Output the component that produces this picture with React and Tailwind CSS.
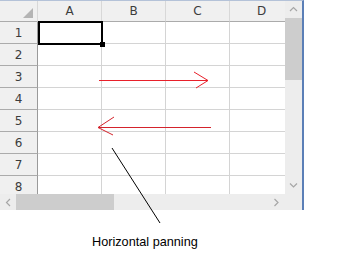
const cols = ['A', 'B', 'C', 'D']
const rows = [1, 2, 3, 4, 5, 6, 7, 8]

function Chevron({ dir }) {
    const paths = {
        up: 'M1 5 L4.5 1.5 L8 5',
        down: 'M1 1.5 L4.5 5 L8 1.5',
        left: 'M5 1 L1.5 4.5 L5 8',
        right: 'M1.5 1 L5 4.5 L1.5 8',
    }
    const size = dir === 'up' || dir === 'down' ? { w: 9, h: 7 } : { w: 7, h: 9 }
    return (
        <svg width={size.w} height={size.h} viewBox={`0 0 ${size.w} ${size.h}`}>
            <path d={paths[dir]} fill="none" stroke="#a6a6a6" strokeWidth="1.2" />
        </svg>
    )
}

export default function App() {
    return (
        <div className="relative h-[267px] w-[361px] bg-white font-['Liberation_Sans',sans-serif]">
            {/* Spreadsheet control */}
            <div className="flex h-[210px] w-[304px] flex-col border-r-2 border-t border-r-[#5b7fb7] border-t-[#b4c2d8] bg-white">
                <div className="flex min-h-0 flex-1">
                    <div className="relative flex-1 overflow-hidden">
                        {/* column headers */}
                        <div className="flex h-[21px] w-max">
                            <div className="relative h-[21px] w-[38px] shrink-0 border-b border-r border-b-[#ababab] border-r-[#d8d8d8] bg-[#f0f0f0]">
                                <div className="absolute bottom-[3px] right-[4px] h-0 w-0 border-b-[10px] border-l-[10px] border-b-[#b4b4b4] border-l-transparent" />
                            </div>
                            {cols.map((c) => (
                                <div
                                    key={c}
                                    className="flex h-[21px] w-[64px] shrink-0 items-center justify-center border-b border-r border-b-[#ababab] border-r-[#d8d8d8] bg-[#f0f0f0] font-['DejaVu_Sans',sans-serif] text-[12px] text-[#3c3c3c]"
                                >
                                    {c}
                                </div>
                            ))}
                        </div>
                        {/* rows */}
                        {rows.map((r) => (
                            <div key={r} className="flex h-[22px] w-max">
                                <div className="flex h-[22px] w-[38px] shrink-0 items-center justify-center border-b border-r border-b-[#ababab] border-r-[#9a9a9a] bg-[#f0f0f0] font-['DejaVu_Sans',sans-serif] text-[12px] text-[#3c3c3c]">
                                    {r}
                                </div>
                                {cols.map((c) => (
                                    <div key={c} className="h-[22px] w-[64px] shrink-0 border-b border-r border-[#d4d4d4] bg-white" />
                                ))}
                            </div>
                        ))}
                        {/* active cell A1 */}
                        <div className="absolute left-[38px] top-[20px] h-[24px] w-[65px] border-2 border-black">
                            <div className="absolute -bottom-[4px] -right-[4px] h-[5px] w-[5px] bg-black" />
                        </div>
                    </div>
                    {/* vertical scrollbar */}
                    <div className="flex w-[17px] shrink-0 flex-col bg-[#ededed]">
                        <div className="flex h-[17px] items-center justify-center">
                            <Chevron dir="up" />
                        </div>
                        <div className="h-[62px] bg-[#cdcdcd]" />
                        <div className="flex-1" />
                        <div className="flex h-[17px] items-center justify-center">
                            <Chevron dir="down" />
                        </div>
                    </div>
                </div>
                {/* horizontal scrollbar */}
                <div className="flex h-[16px] shrink-0">
                    <div className="flex flex-1 bg-[#ededed]">
                        <div className="flex w-[16px] items-center justify-center">
                            <Chevron dir="left" />
                        </div>
                        <div className="w-[98px] bg-[#cdcdcd]" />
                        <div className="flex-1" />
                        <div className="flex w-[17px] items-center justify-center">
                            <Chevron dir="right" />
                        </div>
                    </div>
                    <div className="w-[17px] bg-[#ededed]" />
                </div>
            </div>

            <div className="mt-[25px] pl-[92px] text-[12.7px] leading-[15px] text-black">Horizontal panning</div>

            {/* annotation drawing */}
            <svg className="pointer-events-none absolute inset-0" width="361" height="267">
                <g stroke="#e8202a" strokeWidth="1" fill="none">
                    <line x1="99" y1="80.5" x2="208" y2="80.5" />
                    <line x1="194" y1="72" x2="208" y2="80.5" />
                    <line x1="196" y1="88" x2="208" y2="80.5" />
                </g>
                <g stroke="#d4232c" strokeWidth="1" fill="none">
                    <line x1="98" y1="127.5" x2="211" y2="127.5" />
                    <line x1="114" y1="117" x2="98" y2="127.5" />
                    <line x1="113" y1="135" x2="98" y2="127.5" />
                </g>
                <line x1="112" y1="148" x2="160" y2="223" stroke="#000" strokeWidth="1" />
            </svg>
        </div>
    )
}
